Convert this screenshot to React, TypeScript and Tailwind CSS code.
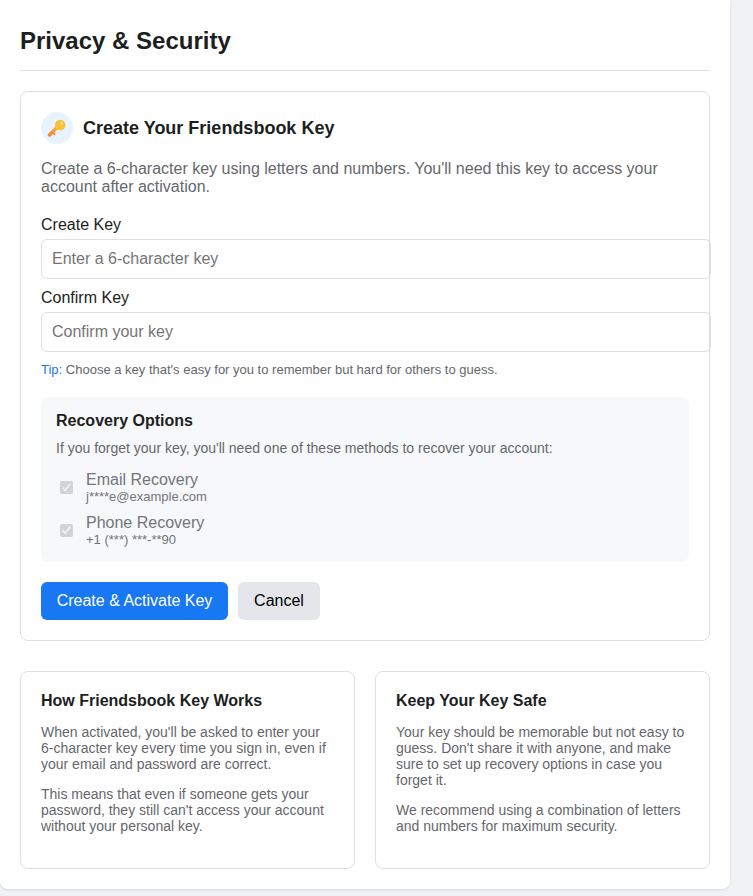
const font = "font-['Liberation_Sans',Arial,sans-serif]";

function KeyIcon() {
  return (
    <svg width="21" height="21" viewBox="0 0 20 20" aria-hidden="true">
      <defs>
        <linearGradient id="keyShaft" x1="0" y1="1" x2="1" y2="0">
          <stop offset="0" stopColor="#ef8a3c" />
          <stop offset="1" stopColor="#f8b23a" />
        </linearGradient>
      </defs>
      <path d="M2.4 16.2 L10 8.6" stroke="url(#keyShaft)" strokeWidth="3.4" strokeLinecap="round" />
      <circle cx="12.6" cy="6.6" r="5" fill="#fac036" />
      <circle cx="14" cy="5.2" r="1.3" fill="#fde38a" />
      <path d="M5.2 13.6 L7.2 15.6" stroke="#ef8a3c" strokeWidth="1.8" strokeLinecap="round" />
    </svg>
  );
}

function RecoveryOption({ title, detail }: { title: string; detail: string }) {
  return (
    <label className="flex items-center h-[38px] text-[#65676b] opacity-90">
      <input type="checkbox" checked disabled readOnly className="ml-[4px] mr-[13px]" />
      <span className="flex flex-col">
        <span className="text-[16px] leading-[18px]">{title}</span>
        <span className="text-[13px] leading-[15px]">{detail}</span>
      </span>
    </label>
  );
}

function InfoCard({ title, paragraphs }: { title: string; paragraphs: string[] }) {
  return (
    <div className="flex-1 h-[198px] rounded-lg border border-[#dddfe2] px-5 pt-5">
      <h3 className="text-[16px] leading-[18px] font-bold text-[#1c1e21] mb-[14px]">{title}</h3>
      {paragraphs.map((p) => (
        <p key={p} className="text-[14px] leading-[16px] text-[#65676b] mb-[14px]">
          {p}
        </p>
      ))}
    </div>
  );
}

export default function App() {
  return (
    <div className={`${font} min-h-[896px] bg-[#f0f2f5]`}>
      <div className="w-[730px] h-[889px] bg-white rounded-b-lg shadow-[0_1px_3px_rgba(0,0,0,0.1)] px-5 pt-[27px]">
        <h1 className="text-[24px] leading-[28px] font-bold text-[#1c1e21] pb-[15px] border-b border-[#dddfe2] mb-5">
          Privacy &amp; Security
        </h1>

        <section className="h-[550px] rounded-lg border border-[#dddfe2] px-5 pt-5">
          <div className="flex items-center gap-[10px] mb-[16px]">
            <div className="w-8 h-8 rounded-full bg-[#e7f3ff] flex items-center justify-center">
              <KeyIcon />
            </div>
            <h2 className="text-[18px] leading-[20px] font-bold text-[#1c1e21]">Create Your Friendsbook Key</h2>
          </div>

          <p className="text-[16px] leading-[18px] text-[#65676b] mb-[20px]">
            Create a 6-character key using letters and numbers. You'll need this key to access your account after
            activation.
          </p>

          <label className="block text-[16px] leading-[18px] text-[#1c1e21] mb-[5px]">Create Key</label>
          <input
            placeholder="Enter a 6-character key"
            className="block w-[670px] h-10 px-[10px] border border-[#dddfe2] rounded-md text-[16px] placeholder:text-[#757575] mb-[10px]"
          />
          <label className="block text-[16px] leading-[18px] text-[#1c1e21] mb-[5px]">Confirm Key</label>
          <input
            placeholder="Confirm your key"
            className="block w-[670px] h-10 px-[10px] border border-[#dddfe2] rounded-md text-[16px] placeholder:text-[#757575] mb-[10px]"
          />
          <p className="text-[13px] leading-[15px] text-[#65676b] mb-[20px]">
            <span className="text-[#1877f2]">Tip:</span> Choose a key that's easy for you to remember but hard for
            others to guess.
          </p>

          <div className="h-[165px] w-[648px] rounded-lg bg-[#f7f8fa] px-[15px] pt-[15px] mb-5">
            <h3 className="text-[16px] leading-[18px] font-bold text-[#1c1e21] mb-[10px]">Recovery Options</h3>
            <p className="text-[14px] leading-[16px] text-[#65676b] mb-[12px]">
              If you forget your key, you'll need one of these methods to recover your account:
            </p>
            <div className="flex flex-col gap-[5px]">
              <RecoveryOption title="Email Recovery" detail="j****e@example.com" />
              <RecoveryOption title="Phone Recovery" detail="+1 (***) ***-**90" />
            </div>
          </div>

          <div className="flex gap-[10px]">
            <button className="h-[38px] w-[187px] rounded-md bg-[#1877f2] text-white text-[16px]">
              Create &amp; Activate Key
            </button>
            <button className="h-[38px] w-[82px] rounded-md bg-[#e4e6eb] text-black text-[16px]">Cancel</button>
          </div>
        </section>

        <div className="flex gap-5 mt-[30px]">
          <InfoCard
            title="How Friendsbook Key Works"
            paragraphs={[
              "When activated, you'll be asked to enter your 6-character key every time you sign in, even if your email and password are correct.",
              "This means that even if someone gets your password, they still can't access your account without your personal key.",
            ]}
          />
          <InfoCard
            title="Keep Your Key Safe"
            paragraphs={[
              "Your key should be memorable but not easy to guess. Don't share it with anyone, and make sure to set up recovery options in case you forget it.",
              "We recommend using a combination of letters and numbers for maximum security.",
            ]}
          />
        </div>
      </div>
    </div>
  );
}
